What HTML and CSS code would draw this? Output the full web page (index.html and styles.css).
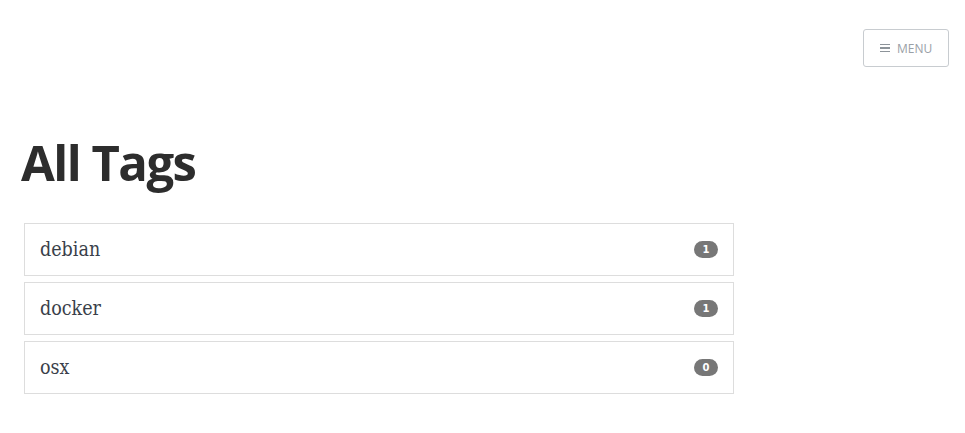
FILE: index.html
```html
<!DOCTYPE html>
<html>
<head>
<meta charset="utf-8">
<link rel="stylesheet" href="styles.css">
</head>
<body>
<header class="topbar">
  <button class="menu-btn"><span class="burger"><i></i><i></i><i></i></span>MENU</button>
</header>
<main class="content">
  <h1 class="title">All Tags</h1>
  <ul class="tag-list">
    <li class="tag-item"><span class="tag-name">debian</span><span class="badge">1</span></li>
    <li class="tag-item"><span class="tag-name">docker</span><span class="badge">1</span></li>
    <li class="tag-item"><span class="tag-name">osx</span><span class="badge">0</span></li>
  </ul>
</main>
</body>
</html>
```
FILE: styles.css
```css
html, body { margin: 0; padding: 0; background: #fff; }
body { font-family: "Open Sans", sans-serif; color: #333; }
.topbar { display: flex; justify-content: flex-end; padding: 29px 16px 0 0; }
.menu-btn {
  display: flex; align-items: center; gap: 7px;
  width: 86px; height: 38px; box-sizing: border-box;
  border: 1px solid #c8ccd0; border-radius: 3px; background: #fff;
  font-family: "Open Sans", sans-serif; font-size: 12px; color: #9aa0a6;
  padding: 0 0 0 16px; cursor: pointer;
}
.burger { display: flex; flex-direction: column; gap: 2px; width: 10px; }
.burger i { display: block; height: 1.5px; background: #8d949a; }
.content { padding: 0 0 0 21px; }
.title {
  margin: 62px 0 0 0; font-size: 49px; font-weight: 700; letter-spacing: -1.5px;
  line-height: 66px; color: #2d2d2d;
}
.tag-list { list-style: none; margin: 28px 0 0 3px; padding: 0; width: 710px; display: flex; flex-direction: column; gap: 6px; }
.tag-item {
  display: flex; align-items: center; justify-content: space-between;
  height: 53px; box-sizing: border-box; border: 1px solid #ddd;
  padding: 0 15px 0 15px;
}
.tag-name { font-family: "DejaVu Serif Condensed", "DejaVu Serif", serif; font-size: 19.5px; color: #3a3f4a; }
.badge {
  display: inline-block; min-width: 24px; height: 17px; box-sizing: border-box;
  border-radius: 9px; background: #777; color: #fff;
  font-family: "DejaVu Sans", sans-serif; font-weight: 700; font-size: 10px;
  line-height: 17px; text-align: center; padding: 0 6px;
}
```
